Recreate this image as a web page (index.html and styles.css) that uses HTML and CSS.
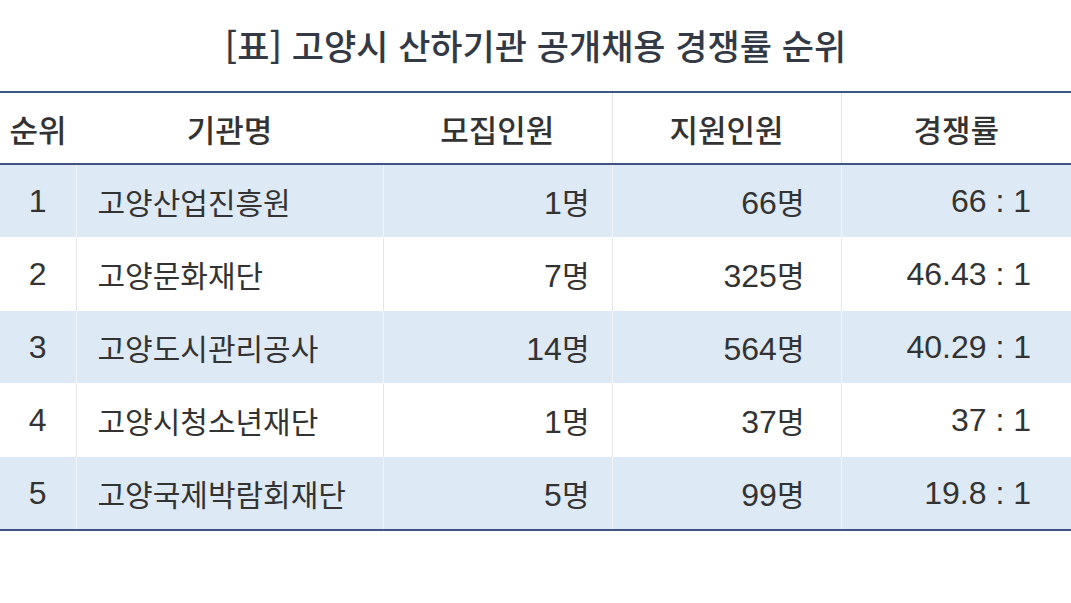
FILE: index.html
```html
<!DOCTYPE html>
<html lang="ko">
<head>
<meta charset="utf-8">
<link rel="stylesheet" href="styles.css">
</head>
<body>
<div class="wrap">
  <h1 class="title">[표] 고양시 산하기관 공개채용 경쟁률 순위</h1>
  <table class="tbl">
    <colgroup>
      <col class="c1"><col class="c2"><col class="c3"><col class="c4"><col class="c5">
    </colgroup>
    <thead>
      <tr><th>순위</th><th>기관명</th><th>모집인원</th><th class="vl">지원인원</th><th class="vl">경쟁률</th></tr>
    </thead>
    <tbody>
      <tr class="odd"><td class="rank"><span class="num">1</span></td><td class="name">고양산업진흥원</td><td class="n3"><span class="num">1</span>명</td><td class="n4"><span class="num">66</span>명</td><td class="n5"><span class="num">66 : 1</span></td></tr>
      <tr><td class="rank"><span class="num">2</span></td><td class="name">고양문화재단</td><td class="n3"><span class="num">7</span>명</td><td class="n4"><span class="num">325</span>명</td><td class="n5"><span class="num">46.43 : 1</span></td></tr>
      <tr class="odd"><td class="rank"><span class="num">3</span></td><td class="name">고양도시관리공사</td><td class="n3"><span class="num">14</span>명</td><td class="n4"><span class="num">564</span>명</td><td class="n5"><span class="num">40.29 : 1</span></td></tr>
      <tr><td class="rank"><span class="num">4</span></td><td class="name">고양시청소년재단</td><td class="n3"><span class="num">1</span>명</td><td class="n4"><span class="num">37</span>명</td><td class="n5"><span class="num">37 : 1</span></td></tr>
      <tr class="odd"><td class="rank"><span class="num">5</span></td><td class="name">고양국제박람회재단</td><td class="n3"><span class="num">5</span>명</td><td class="n4"><span class="num">99</span>명</td><td class="n5"><span class="num">19.8 : 1</span></td></tr>
    </tbody>
  </table>
</div>
</body>
</html>
```

FILE: styles.css
```css
html, body {
  margin: 0;
  padding: 0;
  background: #ffffff;
}
body {
  font-family: "Liberation Sans", "Noto Sans CJK KR", sans-serif;
  color: #333333;
}
.wrap {
  width: 1071px;
}
.title {
  margin: 0;
  padding-top: 23px;
  height: 91px;
  box-sizing: border-box;
  text-align: center;
  font-family: "Noto Sans CJK KR", sans-serif;
  font-size: 35px;
  font-weight: 500;
  line-height: 44px;
  color: #333a45;
}
.tbl {
  width: 1071px;
  border-collapse: collapse;
  table-layout: fixed;
  border-top: 2px solid #3e5584;
  border-bottom: 2px solid #3e5584;
}
.c1 { width: 76px; }
.c2 { width: 307px; }
.c3 { width: 229px; }
.c4 { width: 229px; }
.c5 { width: 230px; }
th {
  height: 70px;
  padding: 0;
  font-size: 31px;
  font-weight: 500;
  color: #333333;
  text-align: center;
  border-bottom: 2px solid #3e5584;
}
th.vl {
  border-left: 1px solid #e4e4e4;
}
td {
  height: 72px;
  padding: 0;
  font-size: 30px;
  font-weight: 400;
  color: #333333;
  border-left: 1px solid #e6e6e6;
  border-top: 1px solid #ffffff;
}
td:first-child { border-left: none; }
tr.odd td {
  background: #dde9f5;
  border-left-color: #f2f6fb;
}
tr.odd td:first-child { border-left: none; }
.num { font-size: 32px; }
.rank { text-align: center; }
.name { text-align: left; padding-left: 21px; }
.n3 { text-align: right; padding-right: 22px; }
.n4 { text-align: right; padding-right: 36px; }
.n5 { text-align: right; padding-right: 40px; }
```
